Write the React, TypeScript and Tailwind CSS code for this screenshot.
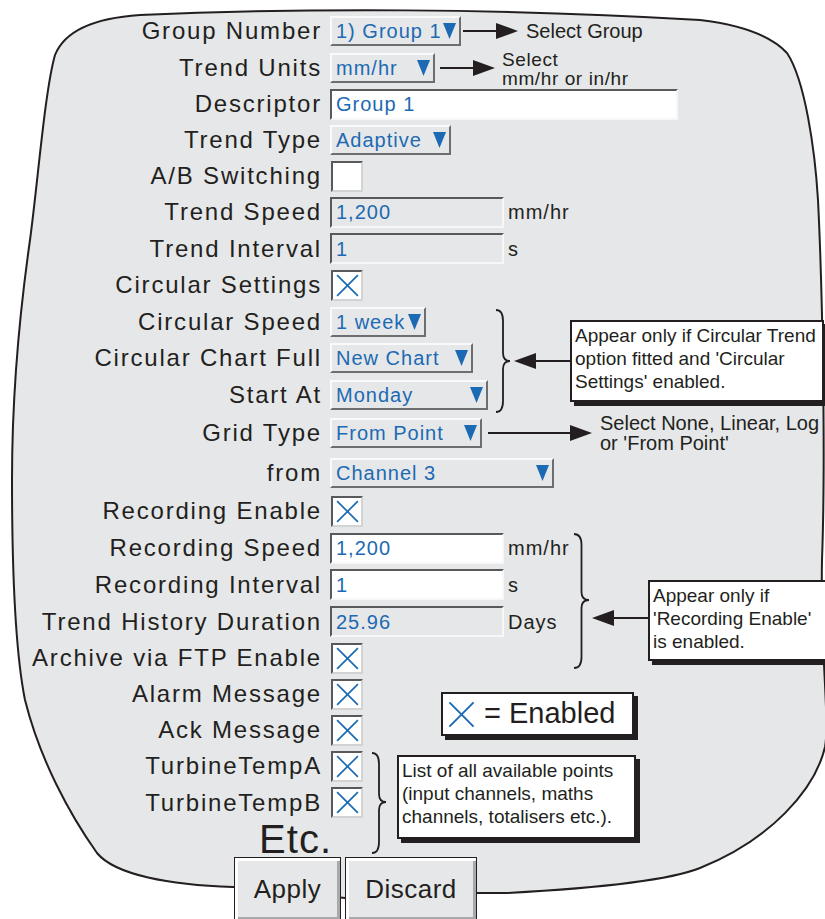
import React from 'react';

const blue = '#1c6ab3';

function Tri() {
  return (
    <svg width="13" height="16" viewBox="0 0 13 16" className="shrink-0">
      <polygon points="0,0 13,0 6.5,16" fill={blue} />
    </svg>
  );
}

function Cross({ size }: { size: number }) {
  return (
    <svg width={size} height={size} viewBox="0 0 24 24">
      <path d="M2 2 L22 22 M22 2 L2 22" stroke={blue} strokeWidth="1.6" fill="none" />
    </svg>
  );
}

function Dropdown({ value, w }: { value: string; w: string }) {
  return (
    <div
      className={`${w} h-[30px] shrink-0 flex items-center justify-between pl-[4px] pr-[3px] bg-[#e6e7e8] border-2 border-t-[#fafafa] border-l-[#fafafa] border-b-[#6d6e71] border-r-[#6d6e71] text-[20px] tracking-[1px] text-[#1c6ab3] whitespace-nowrap`}
    >
      <span>{value}</span>
      <Tri />
    </div>
  );
}

function Field({ value, w, white }: { value: string; w: string; white?: boolean }) {
  return (
    <div
      className={`${w} h-[31px] shrink-0 flex items-center pl-[4px] border-2 border-t-[#58595b] border-l-[#58595b] border-b-[#f7f7f7] border-r-[#f7f7f7] text-[20px] tracking-[1px] text-[#1c6ab3] ${white ? 'bg-white' : 'bg-[#e6e7e8]'}`}
    >
      {value}
    </div>
  );
}

function Check({ on }: { on?: boolean }) {
  return (
    <div className="w-[32px] h-[31px] ml-[1px] shrink-0 bg-white border-2 border-t-[#58595b] border-l-[#58595b] border-b-[#d1d3d4] border-r-[#d1d3d4] flex items-center justify-center">
      {on && <Cross size={25} />}
    </div>
  );
}

function Unit({ children }: { children: React.ReactNode }) {
  return <span className="ml-[4px] text-[20px] tracking-[1px] text-[#231f20]">{children}</span>;
}

function Row({ h, label, children }: { h: string; label: string; children: React.ReactNode }) {
  return (
    <div className={`flex items-center ${h}`}>
      <div className="w-[330px] shrink-0 pr-[8px] text-right text-[24px] tracking-[1.8px] text-[#231f20] whitespace-nowrap">
        {label}
      </div>
      {children}
    </div>
  );
}

// arrow pointing right, drawn in a box of the given width
function ArrowRight({ w, className }: { w: number; className?: string }) {
  return (
    <svg width={w} height="18" viewBox={`0 0 ${w} 18`} className={`shrink-0 ${className ?? ''}`}>
      <line x1="0" y1="9" x2={w - 20} y2="9" stroke="#231f20" strokeWidth="1.8" />
      <polygon points={`${w - 22},1 ${w},9 ${w - 22},17`} fill="#231f20" />
    </svg>
  );
}

function ArrowLeft({ w }: { w: number }) {
  return (
    <svg width={w} height="18" viewBox={`0 0 ${w} 18`}>
      <line x1="20" y1="9" x2={w} y2="9" stroke="#231f20" strokeWidth="1.8" />
      <polygon points="0,9 22,1 22,17" fill="#231f20" />
    </svg>
  );
}

function Brace({ w, h, mid }: { w: number; h: number; mid: number }) {
  const c = w / 2;
  const d = `M1 1 Q${c} 1 ${c} 12 L${c} ${mid - 8} Q${c} ${mid} ${w - 1} ${mid} Q${c} ${mid} ${c} ${mid + 8} L${c} ${h - 12} Q${c} ${h - 1} 1 ${h - 1}`;
  return (
    <svg width={w} height={h} viewBox={`0 0 ${w} ${h}`}>
      <path d={d} stroke="#231f20" strokeWidth="1.8" fill="none" />
    </svg>
  );
}

const calloutCls =
  'absolute bg-white border-2 border-[#231f20] shadow-[4px_4px_0_#231f20] text-[19px] leading-[23px] text-[#231f20] px-[3px] pt-[2px] whitespace-nowrap';

export default function App() {
  return (
    <div className="relative w-[825px] h-[919px] overflow-hidden bg-white font-['Liberation_Sans',Arial,sans-serif]">
      {/* panel outline */}
      <svg className="absolute inset-0" width="825" height="919" viewBox="0 0 825 919">
        <path
          d="M233 887 C170 885 115 875 97 853 C70 815 40 760 25 700 C15 650 12 560 12 480 C12 400 20 310 30 240 C38 180 45 90 55 55 C65 30 95 18 140 15 C300 8 500 8 700 20 C750 26 775 40 787 53 C805 80 815 150 818 200 C822 280 826 450 822 560 C820 650 830 720 825 747 C815 790 770 840 700 868 C670 880 600 888 507 893 L478 893 L345 898 Z"
          fill="#e6e7e8"
          stroke="#231f20"
          strokeWidth="2"
        />
      </svg>

      <div className="relative flex flex-col pt-[13px]">
        <Row h="h-[36px]" label="Group Number">
          <Dropdown value="1) Group 1" w="w-[131px]" />
          <ArrowRight w={55} className="ml-[2px]" />
          <span className="ml-[8px] text-[20px] text-[#231f20] whitespace-nowrap">Select Group</span>
        </Row>
        <Row h="h-[37px]" label="Trend Units">
          <Dropdown value="mm/hr" w="w-[105px]" />
          <ArrowRight w={55} className="ml-[5px]" />
          <div className="ml-[7px] mt-[2px] text-[19px] leading-[19px] tracking-[0.6px] text-[#231f20] whitespace-nowrap">
            <div>Select</div>
            <div>mm/hr or in/hr</div>
          </div>
        </Row>
        <Row h="h-[36px]" label="Descriptor">
          <Field value="Group 1" w="w-[348px]" white />
        </Row>
        <Row h="h-[36px]" label="Trend Type">
          <Dropdown value="Adaptive" w="w-[121px]" />
        </Row>
        <Row h="h-[36px]" label="A/B Switching">
          <Check />
        </Row>
        <Row h="h-[36px]" label="Trend Speed">
          <Field value="1,200" w="w-[174px]" />
          <Unit>mm/hr</Unit>
        </Row>
        <Row h="h-[37px]" label="Trend Interval">
          <Field value="1" w="w-[174px]" />
          <Unit>s</Unit>
        </Row>
        <Row h="h-[36px]" label="Circular Settings">
          <Check on />
        </Row>
        <Row h="h-[37px]" label="Circular Speed">
          <Dropdown value="1 week" w="w-[96px]" />
        </Row>
        <Row h="h-[36px]" label="Circular Chart Full">
          <Dropdown value="New Chart" w="w-[143px]" />
        </Row>
        <Row h="h-[37px]" label="Start At">
          <Dropdown value="Monday" w="w-[158px]" />
        </Row>
        <Row h="h-[40px]" label="Grid Type">
          <Dropdown value="From Point" w="w-[152px]" />
          <ArrowRight w={104} className="ml-[6px]" />
          <div className="ml-[8px] text-[20px] leading-[20px] text-[#231f20] whitespace-nowrap">
            <div>Select None, Linear, Log</div>
            <div>or 'From Point'</div>
          </div>
        </Row>
        <Row h="h-[39px]" label="from">
          <Dropdown value="Channel 3" w="w-[224px]" />
        </Row>
        <Row h="h-[38px]" label="Recording Enable">
          <Check on />
        </Row>
        <Row h="h-[36px]" label="Recording Speed">
          <Field value="1,200" w="w-[174px]" white />
          <Unit>mm/hr</Unit>
        </Row>
        <Row h="h-[37px]" label="Recording Interval">
          <Field value="1" w="w-[174px]" white />
          <Unit>s</Unit>
        </Row>
        <Row h="h-[37px]" label="Trend History Duration">
          <Field value="25.96" w="w-[174px]" />
          <Unit>Days</Unit>
        </Row>
        <Row h="h-[36px]" label="Archive via FTP Enable">
          <Check on />
        </Row>
        <Row h="h-[36px]" label="Alarm Message">
          <Check on />
        </Row>
        <Row h="h-[36px]" label="Ack Message">
          <Check on />
        </Row>
        <Row h="h-[36px]" label="TurbineTempA">
          <Check on />
        </Row>
        <Row h="h-[37px]" label="TurbineTempB">
          <Check on />
        </Row>
        <div className="flex items-center h-[36px]">
          <div className="w-[334px] pr-[2px] text-right text-[40px] leading-none tracking-[1px] text-[#231f20]">Etc.</div>
        </div>

        {/* buttons */}
        <div className="flex gap-[4px] pl-[234px]">
          <button className="w-[107px] h-[64px] flex items-center justify-center bg-[#e6e7e8] border border-[#231f20] shadow-[inset_3px_3px_0_#ffffff,inset_-3px_-3px_0_#a7a9ac] text-[26px] tracking-[0.5px] text-[#231f20]">
            Apply
          </button>
          <button className="w-[132px] h-[64px] flex items-center justify-center bg-[#e6e7e8] border border-[#231f20] shadow-[inset_3px_3px_0_#ffffff,inset_-3px_-3px_0_#a7a9ac] text-[26px] tracking-[0.5px] text-[#231f20]">
            Discard
          </button>
        </div>
      </div>

      {/* circular trend note */}
      <div className="absolute left-[495px] top-[309px]">
        <Brace w={16} h={104} mid={52} />
      </div>
      <div className="absolute left-[514px] top-[352px]">
        <ArrowLeft w={57} />
      </div>
      <div className={`${calloutCls} left-[570px] top-[320px] w-[254px] h-[82px]`}>
        <div>Appear only if Circular Trend</div>
        <div>option fitted and 'Circular</div>
        <div>Settings' enabled.</div>
      </div>

      {/* recording note */}
      <div className="absolute left-[573px] top-[533px]">
        <Brace w={17} h={136} mid={67} />
      </div>
      <div className="absolute left-[592px] top-[609px]">
        <ArrowLeft w={57} />
      </div>
      <div className={`${calloutCls} left-[648px] top-[580px] w-[190px] h-[81px]`}>
        <div>Appear only if</div>
        <div>'Recording Enable'</div>
        <div>is enabled.</div>
      </div>

      {/* legend */}
      <div className="absolute left-[441px] top-[692px] w-[193px] h-[44px] flex items-center pl-[4px] bg-white border-2 border-[#231f20] shadow-[4px_4px_0_#231f20]">
        <Cross size={29} />
        <span className="ml-[8px] text-[29px] text-[#231f20] whitespace-nowrap">= Enabled</span>
      </div>

      {/* points note */}
      <div className="absolute left-[371px] top-[752px]">
        <Brace w={16} h={102} mid={50} />
      </div>
      <div className={`${calloutCls} left-[397px] top-[755px] w-[239px] h-[84px]`}>
        <div>List of all available points</div>
        <div>(input channels, maths</div>
        <div>channels, totalisers etc.).</div>
      </div>
    </div>
  );
}
